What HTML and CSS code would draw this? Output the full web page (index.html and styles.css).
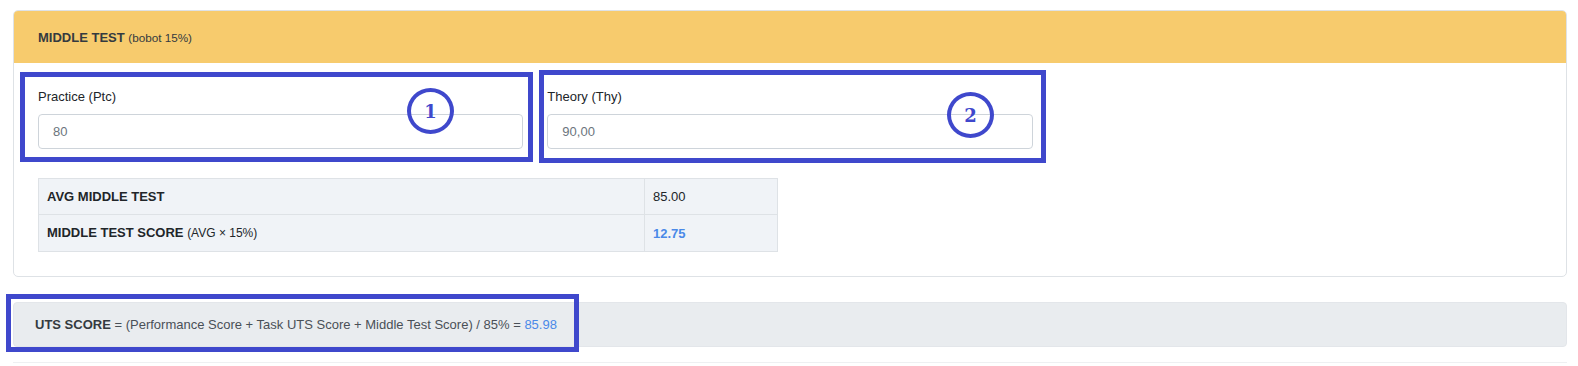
FILE: index.html
```html
<!DOCTYPE html>
<html lang="en">
<head>
    <meta charset="UTF-8">
    <meta name="viewport" content="width=device-width, initial-scale=1.0">
    <title>Middle Test Score</title>
    <link rel="stylesheet" href="styles.css">
</head>
<body>
    <div class="page">
        <section class="card">
            <div class="card-header">
                <strong>MIDDLE TEST</strong>&nbsp;<small>(bobot 15%)</small>
            </div>
            <div class="card-body">
                <div class="form-row">
                    <div class="form-group">
                        <label for="practice">Practice (Ptc)</label>
                        <input type="text" id="practice" class="form-control" value="80">
                    </div>
                    <div class="form-group">
                        <label for="theory">Theory (Thy)</label>
                        <input type="text" id="theory" class="form-control" value="90,00">
                    </div>
                </div>
                <table class="score-table">
                    <tr>
                        <th>AVG MIDDLE TEST</th>
                        <td>85.00</td>
                    </tr>
                    <tr>
                        <th>MIDDLE TEST SCORE <small>(AVG &times; 15%)</small></th>
                        <td class="score">12.75</td>
                    </tr>
                </table>
            </div>
        </section>

        <div class="total-bar">
            <strong>UTS SCORE</strong> = (Performance Score + Task UTS Score + Middle Test Score) / 85% = <span class="total">85.98</span>
        </div>
        <div class="next-section"></div>

        <!-- annotations drawn over the screenshot -->
        <div class="mark mark-practice"></div>
        <div class="mark mark-theory"></div>
        <div class="mark mark-total"></div>
        <span class="badge badge-one">1</span>
        <span class="badge badge-two">2</span>
    </div>
</body>
</html>
```

FILE: styles.css
```css
body {
    font-family: "Liberation Sans", Arial, sans-serif;
    font-size: 13px;
    margin: 0;
    padding: 0;
    background-color: #fff;
    color: #212529;
}

.page {
    position: relative;
    padding: 10px 11px 0 13px;
}

.card {
    border: 1px solid #dee2e6;
    border-radius: 5px;
    overflow: hidden;
}

.card-header {
    display: flex;
    align-items: center;
    height: 52px;
    padding: 0 24px;
    background-color: #f7cb6d;
    color: #343a40;
}

.card-header small {
    font-size: 11.7px;
}

.card-body {
    padding: 24px;
}

.form-row {
    display: grid;
    grid-template-columns: repeat(3, 1fr);
    gap: 24px;
}

label {
    display: block;
    line-height: 19px;
    margin-bottom: 8px;
    color: #212529;
}

.form-control {
    display: block;
    width: 100%;
    height: 35px;
    padding: 0 14px;
    border: 1px solid #ced4da;
    border-radius: 4px;
    box-sizing: border-box;
    font-family: inherit;
    font-size: 13px;
    color: #6c757d;
    background-color: #fff;
}

.score-table {
    width: calc(50% - 12px);
    margin-top: 29px;
    border-collapse: collapse;
    background-color: #f0f3f7;
}

.score-table th,
.score-table td {
    border: 1px solid #dee2e6;
    padding: 8px;
    line-height: 19px;
    text-align: left;
}

.score-table th {
    width: 82%;
    font-weight: bold;
}

.score-table th small {
    font-weight: normal;
    font-size: 12px;
}

.score-table .score {
    font-weight: bold;
    color: #4a89e8;
}

.total-bar {
    margin-top: 25px;
    padding: 12px 21px;
    line-height: 19px;
    background-color: #e9ecef;
    border: 1px solid #e3e6ea;
    border-radius: 4px;
    color: #495057;
}

.total-bar strong {
    color: #343a40;
}

.total {
    color: #4a89e8;
}

.next-section {
    margin-top: 15px;
    border-top: 1px solid #eef0f2;
}

.mark {
    position: absolute;
    border: 5px solid #3f48cc;
    box-sizing: border-box;
}

.mark-practice {
    left: 20px;
    top: 72px;
    width: 513px;
    height: 90px;
}

.mark-theory {
    left: 539px;
    top: 70px;
    width: 507px;
    height: 93px;
}

.mark-total {
    left: 6px;
    top: 294px;
    width: 573px;
    height: 58px;
}

.badge {
    position: absolute;
    width: 47px;
    height: 46px;
    border: 4px solid #3f48cc;
    border-radius: 50%;
    box-sizing: border-box;
    display: flex;
    align-items: center;
    justify-content: center;
    background: transparent;
    font-family: "DejaVu Serif", serif;
    font-weight: bold;
    font-size: 18px;
    color: #3f48cc;
}

.badge-one {
    left: 407px;
    top: 88px;
}

.badge-two {
    left: 947px;
    top: 92px;
}
```
